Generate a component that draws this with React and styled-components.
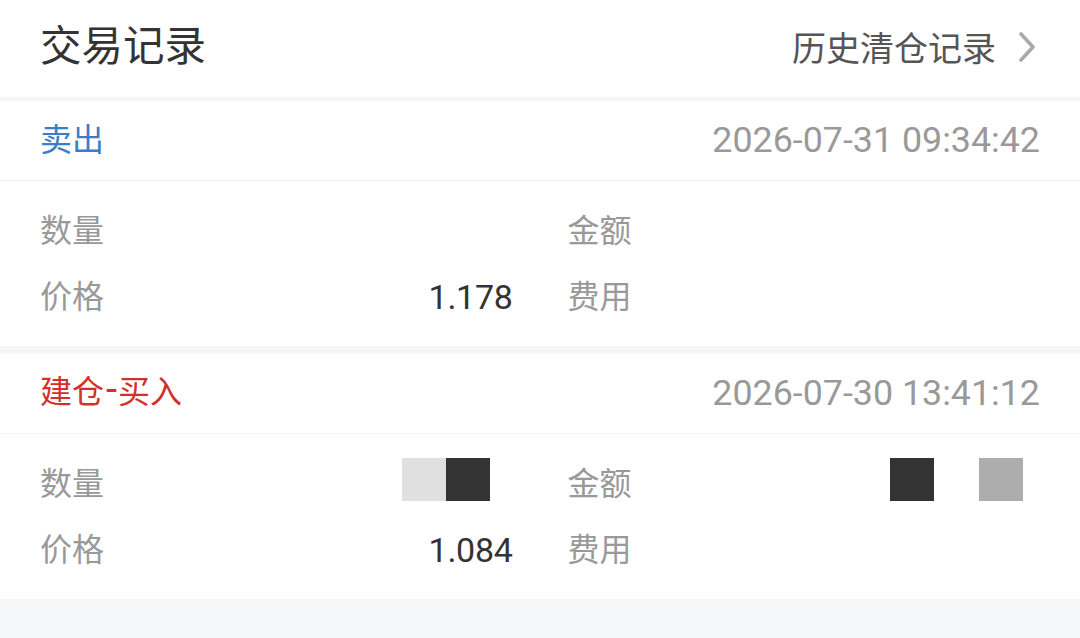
import React from "react";
import styled, { createGlobalStyle } from "styled-components";

const Global = createGlobalStyle`
  html, body { margin: 0; padding: 0; background: #f5f6f8; }
  body {
    font-family: Roboto, "Noto Sans CJK SC", "Noto Sans", sans-serif;
    -webkit-font-smoothing: antialiased;
  }
  * { box-sizing: border-box; }
`;

const Page = styled.div`
  width: 1080px;
  height: 638px;
  background: #f5f6f8;
  display: flex;
  flex-direction: column;
  overflow: hidden;
`;

const Header = styled.div`
  height: 97px;
  background: #fff;
  display: flex;
  align-items: center;
  justify-content: space-between;
  padding: 0 44px 10px 40px;
  margin-bottom: 4px;
`;

const Title = styled.h1`
  margin: 0;
  font-family: "Noto Sans CJK SC", sans-serif;
  font-weight: 400;
  font-size: 41.5px;
  line-height: 1;
  color: #333;
`;

const Link = styled.a`
  display: flex;
  align-items: center;
  gap: 22px;
  font-family: "Noto Sans CJK SC", sans-serif;
  font-size: 34px;
  line-height: 1;
  color: #555;
  text-decoration: none;
  padding-top: 6px;
`;

const Card = styled.section`
  background: #fff;
  margin-bottom: 8px;
`;

const CardHead = styled.div`
  height: 80px;
  display: flex;
  align-items: center;
  justify-content: space-between;
  padding: 0 40px 1px 40px;
  border-bottom: 1px solid #f1f2f4;
`;

const Side = styled.span`
  font-family: "Noto Sans CJK SC", sans-serif;
  font-size: 32px;
  line-height: 1;
  padding-bottom: 6px;
  color: ${(p) => (p.$sell ? "#3b7dc8" : "#d52f2a")};
`;

const Dash = styled.span`
  font-family: Roboto, sans-serif;
  font-size: 40px;
  padding: 0 1px 0 2px;
`;

const Time = styled.span`
  font-family: Roboto, sans-serif;
  font-size: 35.8px;
  color: #999;
`;

const Details = styled.div`
  display: grid;
  grid-template-columns: 1fr 1fr;
  column-gap: 55px;
  padding: 17px 40px 16px 40px;
`;

const Row = styled.div`
  height: 66px;
  display: flex;
  align-items: center;
  justify-content: space-between;
`;

const Label = styled.span`
  font-family: "Noto Sans CJK SC", sans-serif;
  font-size: 32px;
  line-height: 1;
  padding-bottom: 6px;
  color: #999;
`;

const Value = styled.span`
  font-family: Roboto, sans-serif;
  font-size: 34px;
  color: #333;
  letter-spacing: -0.3px;
`;

const Masked = styled.span`
  display: flex;
  margin-right: ${(p) => p.$right || 0}px;
  margin-top: -10px;
`;

const Cell = styled.span`
  width: 44px;
  height: 43px;
  background: ${(p) => p.$c};
  margin-right: ${(p) => p.$gap || 0}px;
`;

const Bottom = styled.div`
  flex: 1;
  background: #f5f6f8;
`;

const Chevron = () => (
  <svg width="18" height="30" viewBox="0 0 18 30" fill="none">
    <path d="M3 2 L15 15 L3 28" stroke="#aaa" strokeWidth="3.6" strokeLinecap="round" strokeLinejoin="round" />
  </svg>
);

const records = [
  {
    side: <>卖出</>,
    sell: true,
    time: "2026-07-31 09:34:42",
    qty: null,
    amount: null,
    price: "1.178",
  },
  {
    side: (
      <>
        建仓<Dash>-</Dash>买入
      </>
    ),
    sell: false,
    time: "2026-07-30 13:41:12",
    qty: (
      <Masked $right={23}>
        <Cell $c="#e0e0e0" />
        <Cell $c="#333" />
      </Masked>
    ),
    amount: (
      <Masked $right={17}>
        <Cell $c="#333" $gap={45} />
        <Cell $c="#adadad" />
      </Masked>
    ),
    price: "1.084",
  },
];

export default function App() {
  return (
    <>
      <Global />
      <Page>
        <Header>
          <Title>交易记录</Title>
          <Link>
            历史清仓记录
            <Chevron />
          </Link>
        </Header>
        {records.map((r) => (
          <Card key={r.time}>
            <CardHead>
              <Side $sell={r.sell}>{r.side}</Side>
              <Time>{r.time}</Time>
            </CardHead>
            <Details>
              <Row>
                <Label>数量</Label>
                {r.qty}
              </Row>
              <Row>
                <Label>金额</Label>
                {r.amount}
              </Row>
              <Row>
                <Label>价格</Label>
                <Value>{r.price}</Value>
              </Row>
              <Row>
                <Label>费用</Label>
              </Row>
            </Details>
          </Card>
        ))}
        <Bottom />
      </Page>
    </>
  );
}
